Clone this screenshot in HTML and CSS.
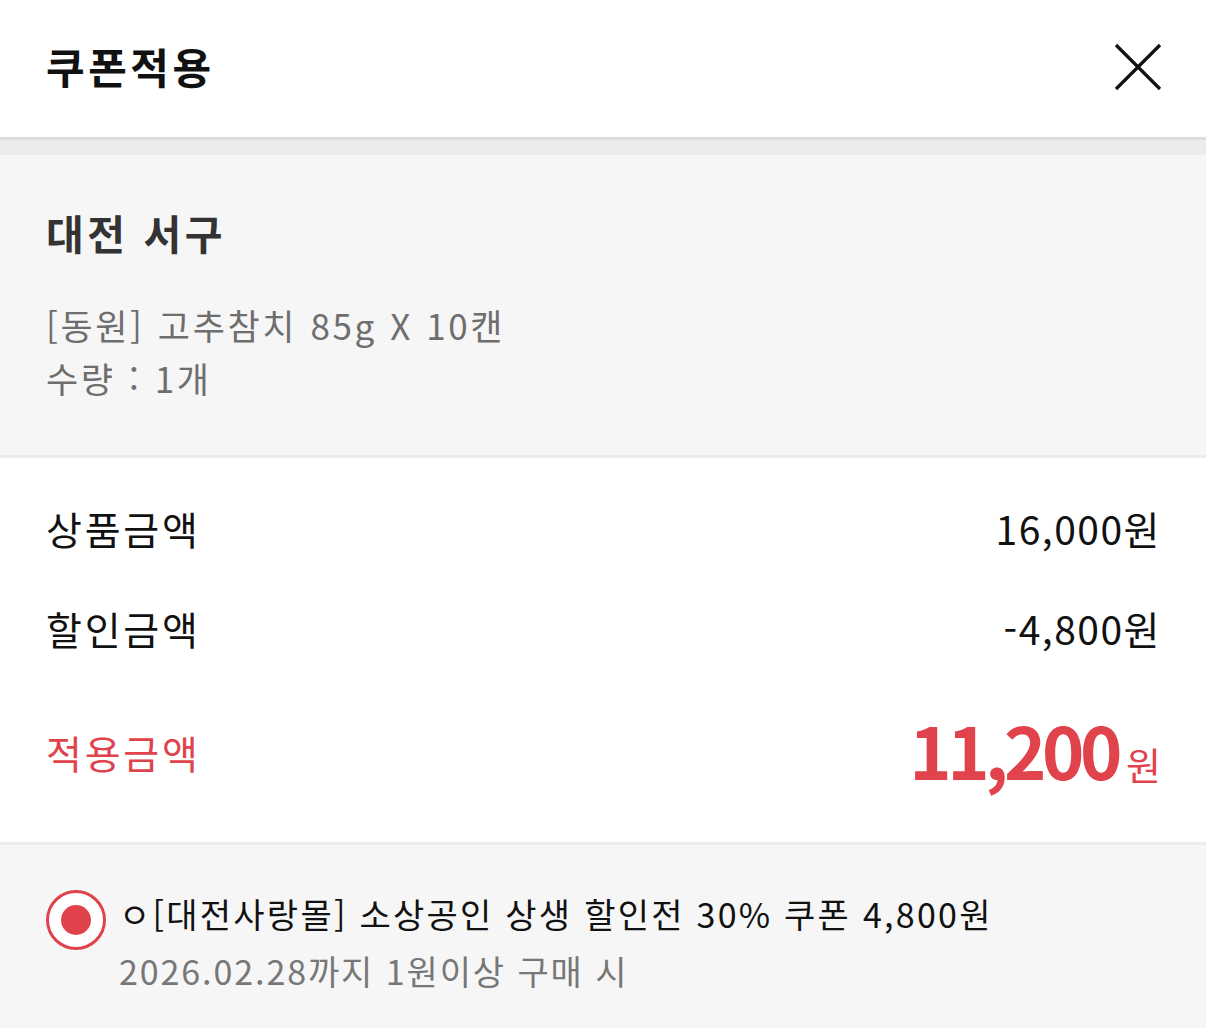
FILE: index.html
```html
<!DOCTYPE html>
<html lang="ko">
<head>
<meta charset="utf-8">
<link rel="stylesheet" href="styles.css">
</head>
<body>
<div class="sheet">
  <header class="head">
    <h1 class="title">쿠폰적용</h1>
    <button class="close" aria-label="닫기">
      <svg width="48" height="48" viewBox="0 0 48 48"><path d="M2 2 L46 46 M46 2 L2 46" stroke="#111" stroke-width="3.2" fill="none"/></svg>
    </button>
  </header>
  <div class="band"></div>
  <section class="product">
    <h2 class="store">대전 서구</h2>
    <p class="pname">[동원] 고추참치 85g X 10캔</p>
    <p class="pname">수량 : 1개</p>
  </section>
  <section class="summary">
    <div class="row"><span>상품금액</span><span>16,000원</span></div>
    <div class="row"><span>할인금액</span><span>-4,800원</span></div>
    <div class="row total"><span>적용금액</span><span class="amt"><b>11,200</b><small>원</small></span></div>
  </section>
  <section class="coupons">
    <label class="coupon">
      <span class="radio"><span class="dot"></span></span>
      <span class="ctext">
        <span class="cname">ㅇ[대전사랑몰] 소상공인 상생 할인전 30% 쿠폰 4,800원</span>
        <span class="cdesc">2026.02.28까지 1원이상 구매 시</span>
      </span>
    </label>
  </section>
</div>
</body>
</html>
```
FILE: styles.css
```css
* { box-sizing: border-box; margin: 0; padding: 0; }
html, body { background: #f6f6f6; }
body {
  font-family: "Noto Sans CJK KR", "Noto Sans", sans-serif;
  color: #111;
  width: 1206px;
  height: 1028px;
  overflow: hidden;
}
.sheet { display: flex; flex-direction: column; }
.head {
  height: 140px;
  background: #fff;
  border-bottom: 3px solid #dcdcdc;
  display: flex;
  align-items: center;
  justify-content: space-between;
  padding: 0 44px 0 46px;
}
.title { font-size: 42px; font-weight: 700; color: #111; letter-spacing: 3.5px; padding-bottom: 6px; }
.close { background: none; border: 0; width: 48px; height: 48px; display: flex; margin-top: -4px; }
.band { height: 15px; background: #ececec; }
.product {
  background: #f6f6f6;
  padding: 35px 46px 0;
  height: 303px;
  border-bottom: 3px solid #ececec;
}
.store { font-size: 41px; font-weight: 700; color: #333; line-height: 84px; margin-bottom: 24px; letter-spacing: 3.5px; }
.pname { font-size: 35px; color: #6e6e6e; line-height: 53px; letter-spacing: 2.6px; word-spacing: 1px; }
.summary {
  background: #fff;
  padding: 20px 48px 28px 46px;
  border-bottom: 3px solid #ececec;
}
.row {
  height: 100px;
  display: flex;
  justify-content: space-between;
  align-items: center;
  font-size: 39px;
  color: #111;
  letter-spacing: 2.8px;
}
.row span:last-child { letter-spacing: 1.5px; margin-right: -3px; }
.row.total { height: 124px; margin-top: 12px; color: #e0434b; }
.amt { display: flex; align-items: baseline; }
.amt b { font-size: 72px; font-weight: 700; letter-spacing: -4.5px; line-height: 1; }
.amt small { font-size: 38px; margin-left: 8px; letter-spacing: 0; }
.coupons { background: #f6f6f6; padding: 40px 46px 0; height: 200px; }
.coupon { display: flex; align-items: flex-start; gap: 13px; }
.radio {
  width: 60px; height: 60px; border-radius: 50%;
  border: 3px solid #e0434b; background: #fff;
  display: flex; align-items: center; justify-content: center;
  flex: none; margin-top: 5px;
}
.dot { width: 30px; height: 30px; border-radius: 50%; background: #e0434b; }
.ctext { display: flex; flex-direction: column; }
.cname { font-size: 34px; line-height: 57px; color: #111; letter-spacing: 2.25px; }
.cdesc { font-size: 34px; line-height: 57px; color: #777; letter-spacing: 1.9px; }
```
